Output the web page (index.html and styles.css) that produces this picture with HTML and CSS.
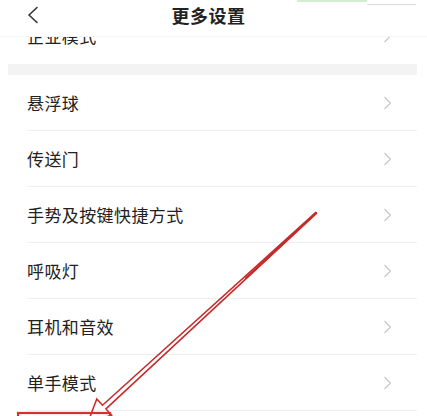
FILE: index.html
```html
<!DOCTYPE html>
<html lang="zh-CN">
<head>
<meta charset="utf-8">
<title>更多设置</title>
<link rel="stylesheet" href="styles.css">
</head>
<body>
<div class="screen">
  <header class="header">
    <div class="bar">
      <svg class="back" width="14" height="18" viewBox="0 0 14 18"><path d="M11 1.5 L3 9 L11 16.5" fill="none" stroke="#333" stroke-width="1.6" stroke-linecap="round" stroke-linejoin="round"/></svg>
      <h1 class="title">更多设置</h1>
    </div>
    <div class="status-green"></div>
    <div class="status-gray"></div>
  </header>

  <main class="scroll">
    <section class="group">
      <div class="row row-last"><span class="label">企业模式</span><svg class="chev" width="9" height="14" viewBox="0 0 9 14"><path d="M1.5 1 L7.5 7 L1.5 13" fill="none" stroke="#c8c8c8" stroke-width="1.2"/></svg></div>
    </section>
    <div class="gap"></div>
    <section class="group">
      <div class="row"><span class="label">悬浮球</span><svg class="chev" width="9" height="14" viewBox="0 0 9 14"><path d="M1.5 1 L7.5 7 L1.5 13" fill="none" stroke="#c8c8c8" stroke-width="1.2"/></svg></div>
      <div class="row"><span class="label">传送门</span><svg class="chev" width="9" height="14" viewBox="0 0 9 14"><path d="M1.5 1 L7.5 7 L1.5 13" fill="none" stroke="#c8c8c8" stroke-width="1.2"/></svg></div>
      <div class="row"><span class="label">手势及按键快捷方式</span><svg class="chev" width="9" height="14" viewBox="0 0 9 14"><path d="M1.5 1 L7.5 7 L1.5 13" fill="none" stroke="#c8c8c8" stroke-width="1.2"/></svg></div>
      <div class="row"><span class="label">呼吸灯</span><svg class="chev" width="9" height="14" viewBox="0 0 9 14"><path d="M1.5 1 L7.5 7 L1.5 13" fill="none" stroke="#c8c8c8" stroke-width="1.2"/></svg></div>
      <div class="row"><span class="label">耳机和音效</span><svg class="chev" width="9" height="14" viewBox="0 0 9 14"><path d="M1.5 1 L7.5 7 L1.5 13" fill="none" stroke="#c8c8c8" stroke-width="1.2"/></svg></div>
      <div class="row"><span class="label">单手模式</span><svg class="chev" width="9" height="14" viewBox="0 0 9 14"><path d="M1.5 1 L7.5 7 L1.5 13" fill="none" stroke="#c8c8c8" stroke-width="1.2"/></svg></div>
      <div class="row"><span class="label">&nbsp;</span></div>
    </section>
  </main>

  <svg class="annot" width="427" height="416" viewBox="0 0 427 416">
    <polygon points="316.4,213.4 105.9,408.9 111.6,415.2 88,422 96.8,399.0 102.5,405.3 315.6,212.6" fill="none" stroke="#c62a2a" stroke-width="1.5" stroke-linejoin="miter"/>
    <line x1="316" y1="213" x2="246" y2="278" stroke="#c62a2a" stroke-width="2.2" stroke-linecap="round"/>
    <rect x="18" y="413" width="92" height="20" fill="none" stroke="#d8302e" stroke-width="2.2"/>
  </svg>
</div>
</body>
</html>
```

FILE: styles.css
```css
* { box-sizing: border-box; }

html, body {
  margin: 0;
  padding: 0;
  background: #ffffff;
}

body {
  font-family: "Noto Sans CJK SC", "Noto Sans", sans-serif;
  color: #222;
}

.screen {
  position: relative;
  width: 427px;
  height: 416px;
  overflow: hidden;
  background: #ffffff;
}

.header {
  position: absolute;
  top: 0;
  left: 0;
  width: 427px;
  height: 37px;
  background: #ffffff;
  border-bottom: 1px solid #f5f5f5;
  z-index: 2;
}

.bar {
  position: relative;
  width: 417px;
  height: 30px;
  display: flex;
  align-items: center;
  justify-content: center;
}

.back {
  position: absolute;
  left: 26px;
  top: 6px;
}

.title {
  margin: 0;
  font-size: 18px;
  font-weight: 700;
  line-height: 30px;
  color: #222;
  letter-spacing: 0.5px;
}

.status-green {
  position: absolute;
  top: 0;
  left: 297px;
  width: 70px;
  height: 2px;
  background: #d4ecd2;
}

.status-gray {
  position: absolute;
  top: 4px;
  left: 367px;
  width: 49px;
  height: 1px;
  background: #dedede;
}

.scroll {
  padding-top: 8px;
}

.group {
  margin-left: 8px;
  width: 409px;
  padding-left: 19px;
}

.row {
  height: 56px;
  display: flex;
  align-items: center;
  justify-content: space-between;
  padding-right: 25px;
  border-bottom: 1px solid #efefef;
}

.row-last {
  border-bottom: none;
}

.label {
  font-size: 17px;
  line-height: 20px;
  color: #222;
  letter-spacing: 0.4px;
}

.chev {
  display: block;
}

.gap {
  margin-left: 8px;
  width: 409px;
  height: 11px;
  background: #f3f3f3;
}

.annot {
  position: absolute;
  top: 0;
  left: 0;
  pointer-events: none;
  z-index: 3;
}
```
